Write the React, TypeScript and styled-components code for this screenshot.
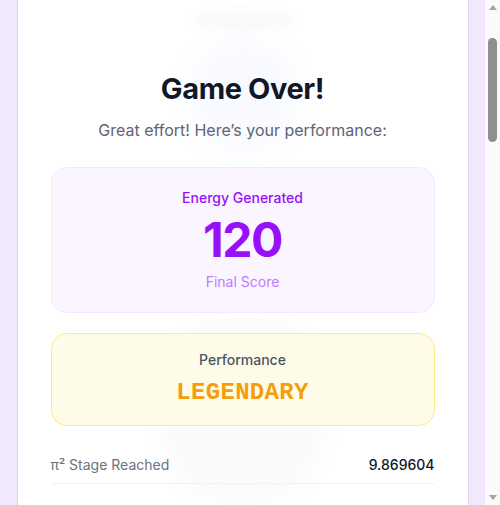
import React, { useEffect, useLayoutEffect } from "react";
import styled, { createGlobalStyle } from "styled-components";

const Global = createGlobalStyle`
  html { background: #f1e8fe; }
  body {
    margin: 0;
    font-family: Inter, "Noto Sans", "Liberation Sans", sans-serif;
    background: #f1e8fe;
  }
  * { box-sizing: border-box; }
`;

const Page = styled.div`
  min-height: 2306px;
  padding: 16px 15px 16px 0;
  display: flex;
  flex-direction: column;
  align-items: center;
`;

const Card = styled.div`
  position: relative;
  width: 100%;
  max-width: 450px;
  background: #ffffff;
  border-radius: 24px;
  padding: 32px 33px;
  box-shadow: 0 0 0 1px rgba(17, 24, 39, 0.06), 0 1px 3px rgba(17, 24, 39, 0.06);
  overflow: hidden;
`;

const Blur = styled.div<{ $top: number; $w: number; $h: number; $color: string; $blur: number; $radius?: string }>`
  position: absolute;
  left: 50%;
  top: ${(p) => p.$top}px;
  width: ${(p) => p.$w}px;
  height: ${(p) => p.$h}px;
  transform: translateX(-50%);
  background: ${(p) => p.$color};
  border-radius: ${(p) => p.$radius ?? "50%"};
  filter: blur(${(p) => p.$blur}px);
  pointer-events: none;
  z-index: 0;
`;

const Content = styled.div`
  position: relative;
  z-index: 1;
  display: flex;
  flex-direction: column;
`;

const Hero = styled.div`
  height: 111px;
  margin-bottom: 24px;
  display: flex;
  justify-content: center;
  align-items: flex-end;
  padding-bottom: 17px;
`;

const Glow = styled.div`
  width: 105px;
  height: 20px;
  border-radius: 50%;
  background: rgba(60, 60, 80, 0.03);
  filter: blur(4px);
`;

const Title = styled.h1`
  margin: 0 0 11px;
  font-size: 29px;
  line-height: 36px;
  font-weight: 700;
  color: #101828;
  text-align: center;
  letter-spacing: -0.4px;
`;

const Subtitle = styled.p`
  margin: 0 0 25px;
  font-size: 16px;
  line-height: 24px;
  color: #5d6473;
  text-align: center;
`;

const Panel = styled.div<{ $bg: string; $border: string; $pad: number }>`
  background: ${(p) => p.$bg};
  border: 1px solid ${(p) => p.$border};
  border-radius: 16px;
  padding: ${(p) => p.$pad}px;
  margin-bottom: 20px;
  text-align: center;
  display: flex;
  flex-direction: column;
  align-items: center;
`;

const PanelLabel = styled.div<{ $color: string }>`
  font-size: 14px;
  line-height: 20px;
  font-weight: 500;
  color: ${(p) => p.$color};
`;

const Score = styled.div`
  margin: 8px 0;
  font-size: 48px;
  line-height: 48px;
  font-weight: 700;
  color: #9810fa;
  letter-spacing: -1.5px;
`;

const Note = styled.div`
  font-size: 14px;
  line-height: 20px;
  color: #c27aff;
`;

const Rank = styled.div`
  margin-top: 7px;
  font-family: "Liberation Mono", "DejaVu Sans Mono", monospace;
  font-size: 24px;
  line-height: 32px;
  font-weight: 700;
  color: #f59e0b;
  letter-spacing: 0.3px;
`;

const StatList = styled.div`
  display: flex;
  flex-direction: column;
  gap: 24px;
  margin: 1px 0 28px;
`;

const StatRow = styled.div`
  display: flex;
  justify-content: space-between;
  align-items: center;
  padding: 8px 0;
  border-bottom: 1px solid #f1f2f4;
  font-size: 14px;
  line-height: 20px;
`;

const StatLabel = styled.span`
  color: #6a7282;
`;

const StatValue = styled.span`
  color: #101828;
  font-weight: 500;
`;

const Actions = styled.div`
  display: flex;
  flex-direction: column;
  gap: 12px;
`;

const Button = styled.button<{ $primary?: boolean }>`
  height: 48px;
  border-radius: 14px;
  font-family: inherit;
  font-size: 16px;
  font-weight: 600;
  cursor: pointer;
  border: ${(p) => (p.$primary ? "none" : "1px solid #e5e7eb")};
  background: ${(p) => (p.$primary ? "linear-gradient(90deg, #9810fa, #c026d3)" : "#ffffff")};
  color: ${(p) => (p.$primary ? "#ffffff" : "#364153")};
`;

/* Browser-style scrollbar overlay */
const Scrollbar = styled.div`
  position: fixed;
  top: 0;
  right: 0;
  bottom: 0;
  width: 15px;
  background: #fafafa;
  display: flex;
  flex-direction: column;
  align-items: center;
  z-index: 10;
`;

const ArrowBtn = styled.div<{ $down?: boolean }>`
  height: 15px;
  width: 15px;
  display: flex;
  align-items: center;
  justify-content: center;
  &::before {
    content: "";
    width: 0;
    height: 0;
    border-left: 4.5px solid transparent;
    border-right: 4.5px solid transparent;
    ${(p) => (p.$down ? "border-top: 5px solid #a3a3a3;" : "border-bottom: 5px solid #a3a3a3;")}
  }
`;

const Track = styled.div`
  flex: 1;
  width: 100%;
  display: flex;
  justify-content: center;
  padding-top: 23px;
`;

const Thumb = styled.div`
  width: 9px;
  height: 104px;
  border-radius: 5px;
  background: #8f8f8f;
`;

const stats = [
  { label: "π² Stage Reached", value: "9.869604" },
  { label: "Total Taps", value: "342" },
  { label: "Best Combo", value: "x12" },
  { label: "Time Played", value: "1:45" },
];

export default function App() {
  useLayoutEffect(() => {
    window.scrollTo(0, 112);
  }, []);
  useEffect(() => {
    const id = requestAnimationFrame(() => window.scrollTo(0, 112));
    return () => cancelAnimationFrame(id);
  }, []);

  return (
    <>
      <Global />
      <Page>
        <Card>
          <Blur $top={136} $w={110} $h={110} $color="rgba(96, 150, 250, 0.045)" $blur={12} />
          <Blur $top={416} $w={160} $h={180} $color="rgba(90, 90, 140, 0.03)" $blur={10} $radius="40%" />
          <Content>
            <Hero>
              <Glow />
            </Hero>
            <Title>Game Over!</Title>
            <Subtitle>Great effort! Here’s your performance:</Subtitle>
            <Panel $bg="#faf5ff" $border="#f3e8ff" $pad={20}>
              <PanelLabel $color="#9810fa">Energy Generated</PanelLabel>
              <Score>120</Score>
              <Note>Final Score</Note>
            </Panel>
            <Panel $bg="#fefce8" $border="#fde98a" $pad={16}>
              <PanelLabel $color="#4a5565">Performance</PanelLabel>
              <Rank>LEGENDARY</Rank>
            </Panel>
            <StatList>
              {stats.map((s) => (
                <StatRow key={s.label}>
                  <StatLabel>{s.label}</StatLabel>
                  <StatValue>{s.value}</StatValue>
                </StatRow>
              ))}
            </StatList>
            <Actions>
              <Button $primary>Play Again</Button>
              <Button>Back to Menu</Button>
            </Actions>
          </Content>
        </Card>
      </Page>
      <Scrollbar>
        <ArrowBtn />
        <Track>
          <Thumb />
        </Track>
        <ArrowBtn $down />
      </Scrollbar>
    </>
  );
}
